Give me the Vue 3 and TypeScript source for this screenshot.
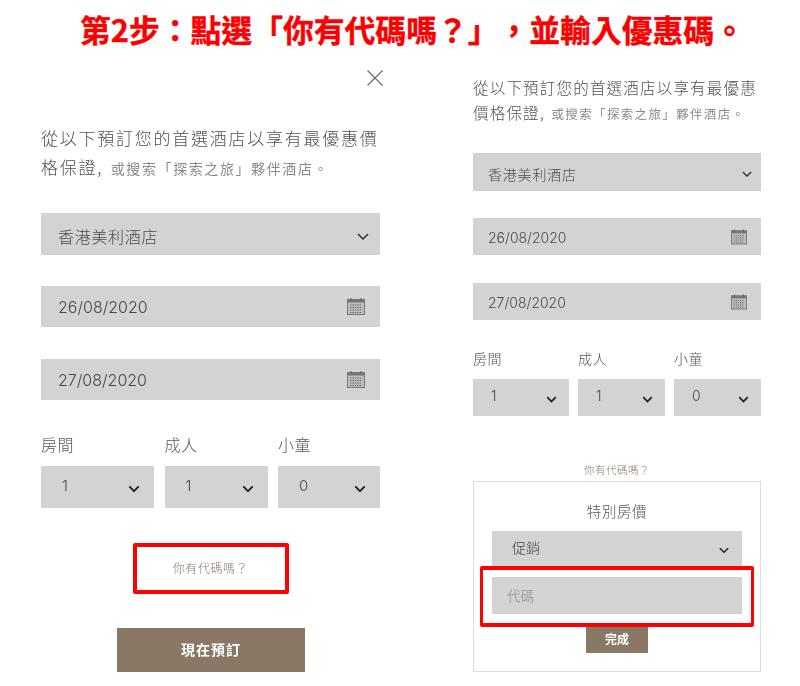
<script setup lang="ts">
const guests = [
  { label: '房間', value: '1', cls: 'c1' },
  { label: '成人', value: '1', cls: 'c2' },
  { label: '小童', value: '0', cls: 'c3' },
]
</script>

<template>
  <div class="page">
    <h1 class="title">第2步：點選「你有代碼嗎？」，並輸入優惠碼。</h1>
    <div class="columns">
      <section class="panel left">
        <div class="close-row">
          <svg width="18" height="18" viewBox="0 0 18 18" fill="none" stroke="#666" stroke-width="1.1">
            <path d="M1.5 1.5 L16.5 16.5 M16.5 1.5 L1.5 16.5" />
          </svg>
        </div>
        <p class="intro">從以下預訂您的首選酒店以享有最優惠價<br />格保證, <span class="muted">或搜索「探索之旅」夥伴酒店。</span></p>
        <div class="field hotel">
          <span>香港美利酒店</span>
          <svg class="chev" width="12" height="7" viewBox="0 0 12 7" fill="none" stroke="#333" stroke-width="1.5"><path d="M1 1 L6 6 L11 1" /></svg>
        </div>
        <div class="field date first">
          <span>26/08/2020</span>
          <svg class="cal" width="18" height="18" viewBox="0 0 18 18">
            <rect x="0.5" y="2.5" width="17" height="15" fill="#bdbdbd" stroke="#777" />
            <rect x="0.5" y="2.5" width="17" height="3" fill="#777" />
            <path d="M4 1v3M14 1v3" stroke="#666" stroke-width="1.2" />
            <path d="M3 8h12M3 10.5h12M3 13h12M3 15.5h12" stroke="#666" stroke-width="1" stroke-dasharray="1.4 1" />
          </svg>
        </div>
        <div class="field date second">
          <span>27/08/2020</span>
          <svg class="cal" width="18" height="18" viewBox="0 0 18 18">
            <rect x="0.5" y="2.5" width="17" height="15" fill="#bdbdbd" stroke="#777" />
            <rect x="0.5" y="2.5" width="17" height="3" fill="#777" />
            <path d="M4 1v3M14 1v3" stroke="#666" stroke-width="1.2" />
            <path d="M3 8h12M3 10.5h12M3 13h12M3 15.5h12" stroke="#666" stroke-width="1" stroke-dasharray="1.4 1" />
          </svg>
        </div>
        <div class="guests">
          <div v-for="g in guests" :key="g.label" class="guest" :class="g.cls">
            <div class="guest-label">{{ g.label }}</div>
            <div class="field small">
              <span>{{ g.value }}</span>
              <svg class="chev" width="12" height="8" viewBox="0 0 14 9" fill="none" stroke="#222" stroke-width="2.2"><path d="M1.5 1.5 L7 7 L12.5 1.5" /></svg>
            </div>
          </div>
        </div>
        <div class="code-link">你有代碼嗎？</div>
        <div class="book">現在預訂</div>
        <div class="red-box left-red"></div>
      </section>

      <section class="panel right">
        <p class="intro">從以下預訂您的首選酒店以享有最優惠<br />價格保證, <span class="muted">或搜索「探索之旅」夥伴酒店。</span></p>
        <div class="field hotel">
          <span>香港美利酒店</span>
          <svg class="chev" width="10" height="6" viewBox="0 0 12 7" fill="none" stroke="#333" stroke-width="1.6"><path d="M1 1 L6 6 L11 1" /></svg>
        </div>
        <div class="field date first">
          <span>26/08/2020</span>
          <svg class="cal" width="16" height="17" viewBox="0 0 18 18">
            <rect x="0.5" y="2.5" width="17" height="15" fill="#bdbdbd" stroke="#777" />
            <rect x="0.5" y="2.5" width="17" height="3" fill="#777" />
            <path d="M4 1v3M14 1v3" stroke="#666" stroke-width="1.2" />
            <path d="M3 8h12M3 10.5h12M3 13h12M3 15.5h12" stroke="#666" stroke-width="1" stroke-dasharray="1.4 1" />
          </svg>
        </div>
        <div class="field date second">
          <span>27/08/2020</span>
          <svg class="cal" width="16" height="17" viewBox="0 0 18 18">
            <rect x="0.5" y="2.5" width="17" height="15" fill="#bdbdbd" stroke="#777" />
            <rect x="0.5" y="2.5" width="17" height="3" fill="#777" />
            <path d="M4 1v3M14 1v3" stroke="#666" stroke-width="1.2" />
            <path d="M3 8h12M3 10.5h12M3 13h12M3 15.5h12" stroke="#666" stroke-width="1" stroke-dasharray="1.4 1" />
          </svg>
        </div>
        <div class="guests">
          <div v-for="g in guests" :key="g.label" class="guest" :class="g.cls">
            <div class="guest-label">{{ g.label }}</div>
            <div class="field small">
              <span>{{ g.value }}</span>
              <svg class="chev" width="11" height="7" viewBox="0 0 14 9" fill="none" stroke="#222" stroke-width="2.2"><path d="M1.5 1.5 L7 7 L12.5 1.5" /></svg>
            </div>
          </div>
        </div>
        <div class="code-link">你有代碼嗎？</div>
        <div class="code-box">
          <div class="code-heading">特別房價</div>
          <div class="field promo">
            <span>促銷</span>
            <svg class="chev" width="10" height="7" viewBox="0 0 12 8" fill="none" stroke="#222" stroke-width="1.7"><path d="M1 1.2 L6 6.2 L11 1.2" /></svg>
          </div>
          <div class="field code-input"><span>代碼</span></div>
          <div class="done">完成</div>
          <div class="red-box right-red"></div>
        </div>
      </section>
    </div>
  </div>
</template>

<style>
html, body { margin: 0; background: #fff; }
</style>

<style scoped>
.page {
  width: 800px;
  height: 686px;
  overflow: hidden;
  background: #fff;
  font-family: Inter, "Noto Sans CJK TC", sans-serif;
  color: #555;
}
.title {
  margin: 0;
  height: 60px;
  padding: 6px 0 0 80px;
  box-sizing: border-box;
  font-family: "Noto Sans CJK TC", sans-serif;
  font-size: 30.8px;
  line-height: 46px;
  font-weight: 700;
  -webkit-text-stroke: 0.4px #fb0000;
  color: #fb0000;
  white-space: nowrap;
  text-spacing-trim: space-all;
}
.columns { display: flex; padding-left: 41px; }
.panel { position: relative; filter: blur(0.35px); }
.left { width: 339px; }
.right { width: 288px; margin-left: 93px; }

.close-row { display: flex; justify-content: flex-end; margin: 9px -4px 0 0; height: 18px; }
.intro { margin: 0; white-space: nowrap; font-family: "Noto Sans CJK TC", sans-serif; font-weight: 300; color: #4f4f4f; text-spacing-trim: space-all; }
.left .intro { margin-top: 36px; font-size: 17px; line-height: 29px; letter-spacing: 1.75px; }
.right .intro { margin-top: 15px; font-size: 15.5px; line-height: 25px; letter-spacing: 1.2px; }
.muted { color: #8a8a8a; font-weight: 400; margin-left: 2px; }
.left .muted { font-size: 14px; letter-spacing: 1.6px; }
.right .muted { font-size: 12.5px; letter-spacing: 1.35px; }

.field {
  background: #d3d3d3;
  display: flex;
  align-items: center;
  justify-content: space-between;
  box-sizing: border-box;
  color: #4a4a4a;
}
.left .field { padding: 0 14px 0 17px; font-size: 16px; }
.right .field { padding: 0 10px 0 15px; font-size: 14px; }
.field span { font-weight: 300; }
.hotel span { font-family: "Noto Sans CJK TC", sans-serif; }
.left .hotel { margin-top: 30px; height: 42px; padding: 4px 11px 0 17px; letter-spacing: 0.7px; }
.left .date { padding-top: 1px; }
.left .date .cal { position: relative; top: -1px; }
.left .date.first { margin-top: 31px; height: 41px; }
.left .date.second { margin-top: 32px; height: 41px; }
.right .hotel { margin-top: 27px; height: 38px; padding: 4px 9px 0 15px; letter-spacing: 0.8px; }
.right .date { padding-top: 2px; }
.right .date .cal { position: relative; top: -1px; }
.right .date.first { margin-top: 27px; height: 37px; }
.right .date.second { margin-top: 28px; height: 37px; }
.cal { flex: none; }
.left .cal { margin-right: 1px; }
.right .cal { margin-right: 4px; }

.guests { display: flex; justify-content: space-between; }
.left .guests { margin-top: 33px; }
.right .guests { margin-top: 28px; }
.guest-label { font-family: "Noto Sans CJK TC", sans-serif; font-weight: 300; color: #555; }
.left .guest-label { font-size: 16px; height: 24px; line-height: 22px; margin-bottom: 9px; letter-spacing: 0.5px; }
.right .guest-label { font-size: 14px; height: 22px; line-height: 20px; margin-bottom: 9px; letter-spacing: 0.5px; }
.left .c1 { width: 113px; }
.left .c2 { width: 103px; }
.left .c3 { width: 102px; }
.right .c1 { width: 96px; }
.right .c2 { width: 87px; }
.right .c3 { width: 87px; }
.left .small { height: 42px; padding: 0 14px 0 21px; font-size: 15px; }
.right .small { height: 37px; padding: 0 12px 0 18px; font-size: 14px; }
.left .small span { position: relative; top: -2px; }
.right .small span { position: relative; top: -2px; }
.small .chev { position: relative; top: 2px; }

.code-link { text-align: center; color: #8a7866; font-family: "Noto Sans CJK TC", sans-serif; font-weight: 300; text-spacing-trim: space-all; }
.left .code-link { margin-top: 50px; height: 20px; line-height: 20px; font-size: 12px; letter-spacing: 0.6px; }
.right .code-link { margin-top: 46px; height: 16px; line-height: 16px; font-size: 10.5px; letter-spacing: 0.5px; }
.book {
  margin: 50px 0 0 76px;
  width: 188px;
  height: 44px;
  line-height: 42px;
  background: #8a7866;
  color: #fff;
  text-align: center;
  font-family: "Noto Sans CJK TC", sans-serif;
  font-size: 14px;
  font-weight: 700;
  letter-spacing: 1px;
}
.code-box {
  position: relative;
  margin-top: 3px;
  height: 191px;
  box-sizing: border-box;
  border: 1px solid #dcdcdc;
  padding: 18px 18px 0;
}
.code-heading {
  height: 22px;
  line-height: 22px;
  text-align: center;
  font-family: "Noto Sans CJK TC", sans-serif;
  font-weight: 300;
  font-size: 14.5px;
  letter-spacing: 0.6px;
  color: #555;
}
.right .promo { margin-top: 9px; height: 35px; padding: 0 13px 4px 20px; font-size: 14px; color: #444; font-family: "Noto Sans CJK TC", sans-serif; }
.right .promo .chev { position: relative; top: 4px; }
.right .code-input { margin-top: 11px; height: 37px; padding: 0 15px 2px; font-size: 13.5px; color: #a4a4a4; font-family: "Noto Sans CJK TC", sans-serif; }
.right .code-input span { font-weight: 400; }
.done {
  margin: 13px auto 0;
  width: 62px;
  height: 26px;
  line-height: 23px;
  background: #8a7866;
  color: #fff;
  text-align: center;
  font-family: "Noto Sans CJK TC", sans-serif;
  font-size: 12px;
  font-weight: 700;
}
.red-box {
  position: absolute;
  box-sizing: border-box;
  border: 4px solid #ff0000;
  border-radius: 2px;
}
.left-red { left: 92px; top: 483px; width: 156px; height: 51px; }
.right-red { left: 6px; top: 84px; width: 274px; height: 61px; border-width: 4px 3px; }
</style>
